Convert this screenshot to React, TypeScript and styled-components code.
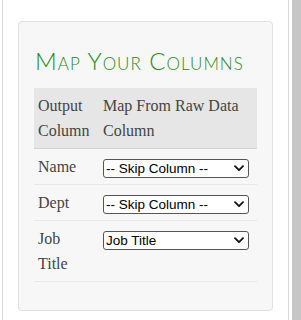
import { styled, createGlobalStyle } from 'styled-components'

const GlobalStyle = createGlobalStyle`
  html, body {
    margin: 0;
    padding: 0;
    background: #fff;
  }
`

const Page = styled.div`
  display: flex;
  height: 320px;
  overflow: hidden;
`

const Frame = styled.div`
  margin-left: 2px;
  width: 287px;
  box-sizing: border-box;
  border-left: 1px solid #d8d8d8;
  border-right: 1px solid #d8d8d8;
  padding: 21px 15px 0 15px;
`

const Scroll = styled.div`
  margin-left: 3px;
  width: 9px;
  background: #c6c6c6;
`

const Panel = styled.div`
  background: #f7f7f7;
  border: 1px solid #e0e0e0;
  border-radius: 4px;
  padding: 26px 14px 28px 15px;
  width: 255px;
  box-sizing: border-box;
`

const Title = styled.h2`
  margin: 0 0 15px 1px;
  font-family: Lato, 'Open Sans', sans-serif;
  font-weight: 300;
  font-variant: small-caps;
  font-size: 24px;
  line-height: 25px;
  letter-spacing: 1px;
  color: #2a8a1e;
  white-space: nowrap;
`

const Table = styled.table`
  width: 223px;
  border-collapse: collapse;
  font-family: 'Liberation Serif', 'Times New Roman', serif;
  font-size: 16px;
  line-height: 25px;
  color: #444;
`

const HeadCell = styled.th<{ $first?: boolean }>`
  background: #e6e6e6;
  font-weight: normal;
  text-align: left;
  vertical-align: top;
  padding: ${(p) => (p.$first ? '5px 9px 5px 4px' : '5px 4px')};
  border-bottom: 1px solid #d2d2d2;
  width: ${(p) => (p.$first ? '52px' : 'auto')};
`

const Cell = styled.td<{ $first?: boolean }>`
  vertical-align: top;
  padding: ${(p) => (p.$first ? '5px 9px 5px 4px' : '5px 4px')};
  border-bottom: 1px solid #e8e8e8;
`

const SelectWrap = styled.div`
  position: relative;
  margin-top: 5px;
  width: 146px;
  height: 19px;
`

const Select = styled.select`
  appearance: none;
  width: 146px;
  height: 19px;
  font-family: 'Liberation Sans', Arial, sans-serif;
  font-size: 13.5px;
  color: #000;
  background: #fff;
  border: 1px solid #555;
  border-radius: 3px;
  padding: 0 0 0 2px;
  display: block;
  box-sizing: border-box;
`

const Chevron = styled.svg`
  position: absolute;
  right: 5px;
  top: 6px;
  width: 10px;
  height: 7px;
  pointer-events: none;
`

const rows = [
  { label: 'Name', value: '-- Skip Column --' },
  { label: 'Dept', value: '-- Skip Column --' },
  { label: 'Job Title', value: 'Job Title' },
]

const options = ['-- Skip Column --', 'Name', 'Department', 'Job Title']

export default function App() {
  return (
    <>
      <GlobalStyle />
      <Page>
        <Frame>
          <Panel>
            <Title>Map Your Columns</Title>
            <Table>
              <thead>
                <tr>
                  <HeadCell $first>Output Column</HeadCell>
                  <HeadCell>Map From Raw Data Column</HeadCell>
                </tr>
              </thead>
              <tbody>
                {rows.map((r) => (
                  <tr key={r.label}>
                    <Cell $first>{r.label}</Cell>
                    <Cell>
                      <SelectWrap>
                        <Select defaultValue={r.value}>
                          {options.map((o) => (
                            <option key={o}>{o}</option>
                          ))}
                        </Select>
                        <Chevron viewBox="0 0 10 7">
                          <path d="M1 1.2 L5 5.2 L9 1.2" fill="none" stroke="#111" strokeWidth="1.8" strokeLinecap="round" strokeLinejoin="round" />
                        </Chevron>
                      </SelectWrap>
                    </Cell>
                  </tr>
                ))}
              </tbody>
            </Table>
          </Panel>
        </Frame>
        <Scroll />
      </Page>
    </>
  )
}
